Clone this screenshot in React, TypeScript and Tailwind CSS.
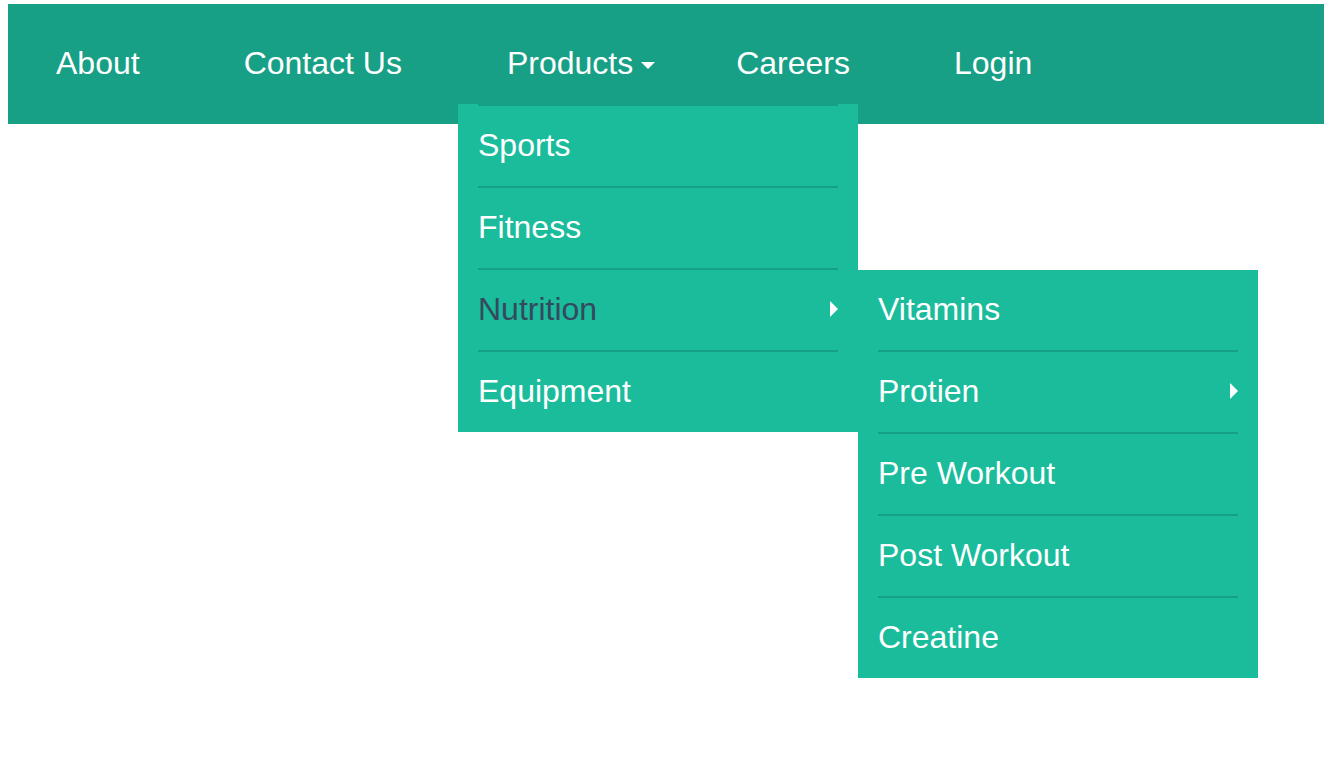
import React from "react";

const font = { fontFamily: '"Liberation Sans", Arial, sans-serif' };

function RightArrow() {
  return (
    <span className="block w-0 h-0 border-l-[8px] border-l-white border-y-[8px] border-y-transparent" />
  );
}

function Item({
  label,
  first,
  arrow,
  dark,
  children,
}: {
  label: string;
  first?: boolean;
  arrow?: boolean;
  dark?: boolean;
  children?: React.ReactNode;
}) {
  return (
    <li className="relative px-5">
      <div
        className={`flex items-center justify-between h-[82px] pb-[2px] ${
          first ? "" : "border-t-2 border-[#16a085]"
        }`}
      >
        <span className={dark ? "text-[#34495e]" : "text-white"}>{label}</span>
        {arrow && <RightArrow />}
      </div>
      {children}
    </li>
  );
}

export default function App() {
  return (
    <div className="min-h-[764px] bg-white" style={font}>
      <nav className="relative ml-2 mt-1 h-[120px] bg-[#17a086]">
        <ul className="flex h-full items-center pl-12 text-[32px] text-white pb-[2px]">
          <li className="mr-[104px]">About</li>
          <li className="mr-[105px]">Contact Us</li>
          <li className="relative mr-[58px] flex items-center">
            <span>Products</span>
            <span className="ml-[8px] mr-[23px] mt-[4px] block w-0 h-0 border-x-[7px] border-x-transparent border-t-[7px] border-t-white" />
          </li>
          <li className="mr-[104px]">Careers</li>
          <li>Login</li>
        </ul>
        <ul className="absolute left-[450px] top-[100px] w-[400px] bg-[#1abc9c] text-[32px]">
          <Item label="Sports" />
          <Item label="Fitness" />
          <Item label="Nutrition" arrow dark>
            <ul className="absolute left-[400px] top-[2px] w-[400px] bg-[#1abc9c]">
              <li className="px-5">
                <div className="flex items-center h-[80px] pb-[2px] text-white">Vitamins</div>
              </li>
              <Item label="Protien" arrow />
              <Item label="Pre Workout" />
              <Item label="Post Workout" />
              <Item label="Creatine" />
            </ul>
          </Item>
          <Item label="Equipment" />
        </ul>
      </nav>
    </div>
  );
}
